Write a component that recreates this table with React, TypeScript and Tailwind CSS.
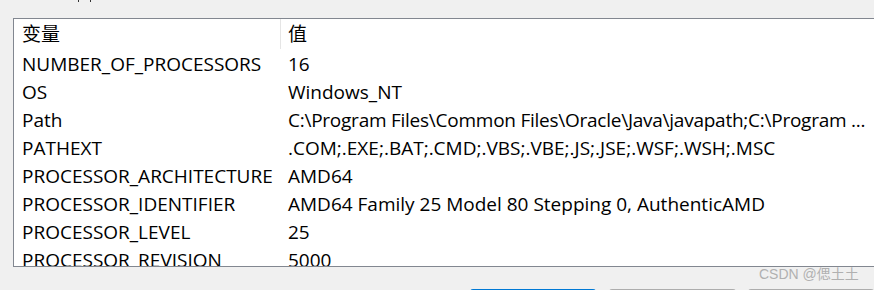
const rows: [string, string][] = [
  ["NUMBER_OF_PROCESSORS", "16"],
  ["OS", "Windows_NT"],
  ["Path", "C:\\Program Files\\Common Files\\Oracle\\Java\\javapath;C:\\Program ..."],
  ["PATHEXT", ".COM;.EXE;.BAT;.CMD;.VBS;.VBE;.JS;.JSE;.WSF;.WSH;.MSC"],
  ["PROCESSOR_ARCHITECTURE", "AMD64"],
  ["PROCESSOR_IDENTIFIER", "AMD64 Family 25 Model 80 Stepping 0, AuthenticAMD"],
  ["PROCESSOR_LEVEL", "25"],
  ["PROCESSOR_REVISION", "5000"],
];

export default function App() {
  return (
    <div
      className="relative h-[290px] w-[874px] overflow-hidden bg-[#f0f0f0] text-black"
      style={{ fontFamily: '"Open Sans", "Noto Sans CJK SC", sans-serif' }}
    >
      {/* clipped label above the list */}
      <div className="flex h-[18px] items-start pl-[78px]">
        <span className="h-[2px] w-[1px] bg-[#333]" />
        <span className="ml-[11px] h-[2px] w-[1px] bg-[#333]" />
      </div>

      <div className="ml-[13px] h-[249px] w-[900px] overflow-hidden border border-[#828790] bg-white text-[19px]">
        <div className="flex h-[31px] items-center">
          <div className="w-[266px] pl-[8px]">变量</div>
          <div className="h-[30px] w-px self-start bg-[#e5e5e5]" />
          <div className="pl-[7px]">值</div>
        </div>
        {rows.map(([name, value]) => (
          <div key={name} className="flex h-[28px] items-center whitespace-nowrap">
            <div className="w-[267px] pl-[8px]">{name}</div>
            <div className={name === "Path" ? "pl-[7px] tracking-[-0.25px]" : "pl-[7px]"}>{value}</div>
          </div>
        ))}
      </div>

      <div className="mt-[22px] flex pl-[470px]">
        <div className="h-[30px] w-[136px] rounded-[3px] border-t border-[#0078d4] bg-[#fdfdfd]" />
        <div className="ml-[13px] h-[30px] w-[136px] rounded-[3px] border-t border-[#adadad] bg-[#fdfdfd]" />
        <div className="ml-[12px] h-[30px] w-[136px] rounded-[3px] border-t border-[#adadad] bg-[#fdfdfd]" />
      </div>

      <div
        className="absolute left-[759px] top-[264px] text-[14px] text-[#b0b0b0]"
        style={{ fontFamily: '"Liberation Sans", "Noto Sans CJK SC", sans-serif' }}
      >
        CSDN @偲土土
      </div>
    </div>
  );
}
